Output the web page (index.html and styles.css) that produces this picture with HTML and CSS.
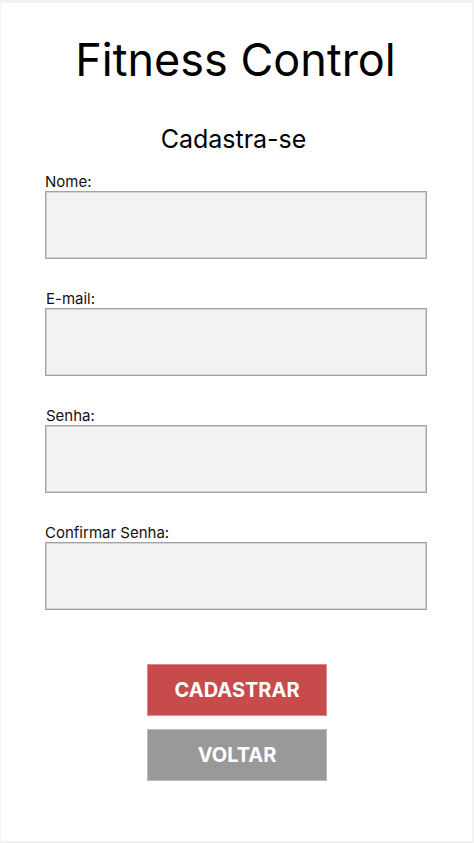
FILE: index.html
```html
<!DOCTYPE html>
<html lang="pt-BR">
<head>
<meta charset="utf-8">
<title>Fitness Control - Cadastro</title>
<link rel="stylesheet" href="styles.css">
</head>
<body>
<main class="card">
  <h1 class="title">Fitness Control</h1>
  <h2 class="subtitle">Cadastra-se</h2>
  <form class="form">
    <div class="field">
      <label class="label" for="nome">Nome:</label>
      <input class="input" id="nome" type="text">
    </div>
    <div class="field field-shift">
      <label class="label" for="email">E-mail:</label>
      <input class="input" id="email" type="email">
    </div>
    <div class="field field-shift">
      <label class="label" for="senha">Senha:</label>
      <input class="input" id="senha" type="password">
    </div>
    <div class="field">
      <label class="label" for="confirmar">Confirmar Senha:</label>
      <input class="input" id="confirmar" type="password">
    </div>
    <div class="actions">
      <button type="submit" class="btn btn-primary">CADASTRAR</button>
      <button type="button" class="btn btn-secondary">VOLTAR</button>
    </div>
  </form>
</main>
</body>
</html>
```
FILE: styles.css
```css
* { box-sizing: border-box; }
html, body { margin: 0; padding: 0; }
body {
  background: #f2f2f2;
  font-family: Inter, "Noto Sans", sans-serif;
  color: #000;
  width: 474px;
  height: 843px;
  padding: 3px 2px 2px 1px;
}
.card {
  background: #fff;
  height: 838px;
  display: flex;
  flex-direction: column;
  align-items: center;
  padding-top: 29px;
}
.title {
  margin: 0 0 0 -2px;
  font-size: 45px;
  font-weight: 400;
  line-height: 56px;
}
.subtitle {
  margin: 36px 0 0 -6px;
  font-size: 25px;
  font-weight: 400;
  line-height: 30px;
}
.form {
  width: 382px;
  margin: 19px 0 0 -1px;
  display: flex;
  flex-direction: column;
  gap: 31px;
}
.field {
  display: flex;
  flex-direction: column;
  gap: 1px;
}
.field-shift .label { padding-left: 1px; }
.label {
  font-size: 15px;
  line-height: 17px;
  color: #111;
}
.input {
  height: 68px;
  width: 100%;
  margin: 0;
  background: #f3f3f3;
  border: 1px solid #a4a4a4;
  box-shadow: inset 0 0 0 1px #d2d2d2;
  outline: none;
  font: inherit;
}
.actions {
  margin-top: 23px;
  display: flex;
  flex-direction: column;
  align-items: center;
  gap: 13px;
  padding-left: 2px;
}
.btn {
  width: 180px;
  height: 52px;
  border: 1px solid rgba(255,255,255,0.35);
  font-family: Inter, "Noto Sans", sans-serif;
  font-size: 20px;
  font-weight: 700;
  color: #fff;
  cursor: pointer;
}
.btn-primary { background: #c84b4c; }
.btn-secondary { background: #999999; }
```
